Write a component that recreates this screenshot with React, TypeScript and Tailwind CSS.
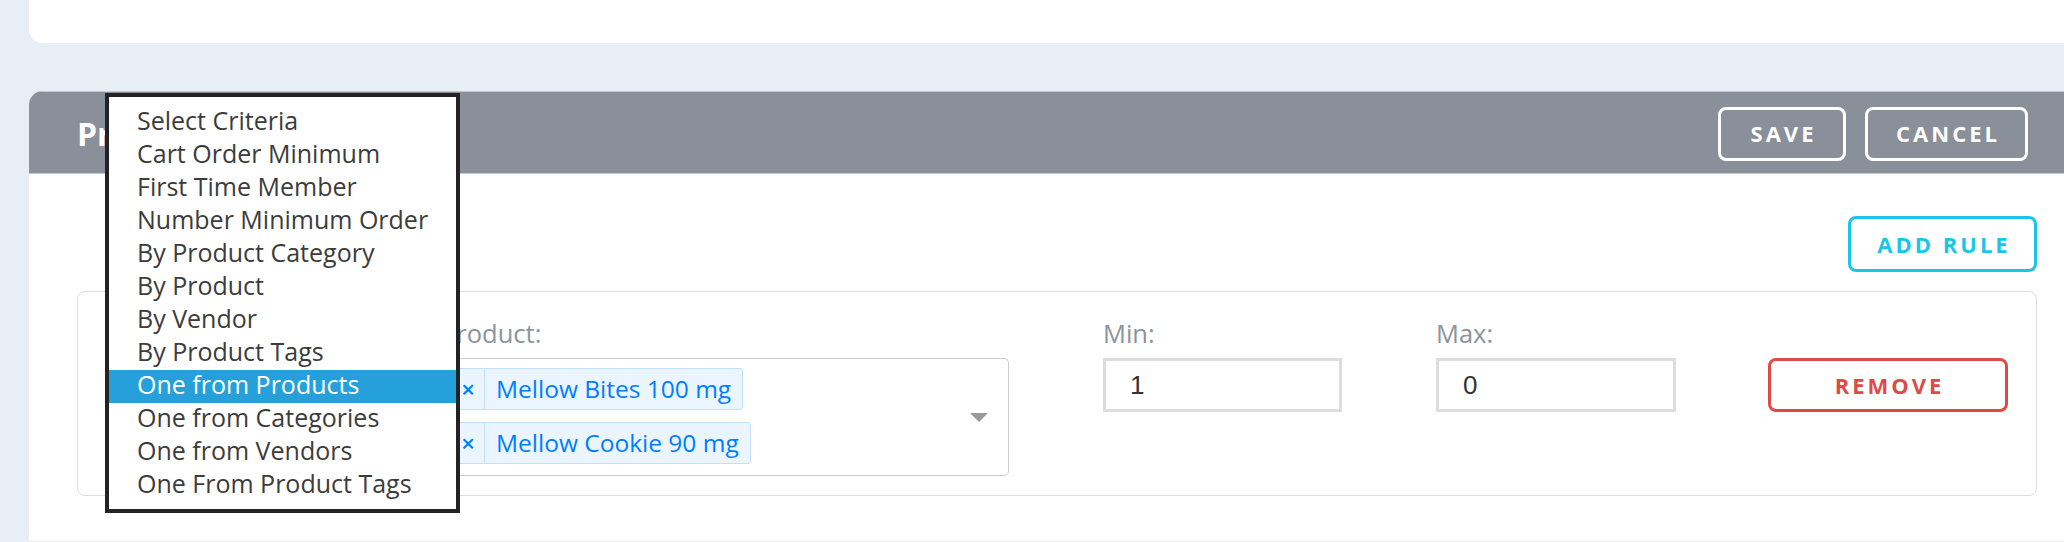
import React from "react";

const criteria = [
  "Select Criteria",
  "Cart Order Minimum",
  "First Time Member",
  "Number Minimum Order",
  "By Product Category",
  "By Product",
  "By Vendor",
  "By Product Tags",
  "One from Products",
  "One from Categories",
  "One from Vendors",
  "One From Product Tags",
];

const products = ["Mellow Bites 100 mg", "Mellow Cookie 90 mg"];

function Label({ children }: { children?: React.ReactNode }) {
  return (
    <div className="mb-[7px] h-[36px] text-[25.5px] leading-[36px] text-[#8b949c]">
      {children}
    </div>
  );
}

function NumberBox({ value, width }: { value: string; width: string }) {
  return (
    <input
      readOnly
      value={value}
      className={`h-[54px] ${width} border-[3px] border-[#dddddd] bg-white pl-[24px] font-['Liberation_Sans',sans-serif] text-[26px] text-[#333333] outline-none`}
    />
  );
}

export default function App() {
  return (
    <div className="relative min-h-[542px] overflow-hidden bg-[#e8eef5] pl-[29px] font-['Open_Sans',sans-serif]">
      {/* top card */}
      <div className="h-[43px] rounded-bl-[14px] bg-white" />

      {/* panel */}
      <div className="mt-[48px] overflow-hidden rounded-tl-[14px] bg-white">
        <div className="flex h-[83px] items-center justify-between border-y border-[#c4c9cf] bg-[#8a9099] pl-[48px] pr-[36px] pt-[2px]">
          <h2 className="text-[32px] font-bold text-white">Promotion Rules</h2>
          <div className="flex gap-[19px]">
            <button className="h-[54px] w-[128px] rounded-[8px] border-[3px] border-white pl-[3px] text-[22px] font-bold tracking-[3px] text-white">
              SAVE
            </button>
            <button className="h-[54px] w-[163px] rounded-[8px] border-[3px] border-white pl-[3px] text-[22px] font-bold tracking-[3px] text-white">
              CANCEL
            </button>
          </div>
        </div>

        <div className="pb-[45px] pl-[48px] pr-[27px] pt-[42px]">
          <div className="flex justify-end">
            <button className="h-[56px] w-[189px] rounded-[8px] border-[3px] border-[#1bc5ea] pl-[3px] text-[22px] font-bold tracking-[3px] text-[#1bc5ea]">
              ADD RULE
            </button>
          </div>

          {/* rule */}
          <div className="mt-[19px] rounded-[8px] border border-[#dddddd] pb-[19px] pl-[29px] pt-[23px]">
            <div className="flex items-start gap-[94px]">
              {/* criteria column, covered by the open list */}
              <div className="w-[240px]">
                <Label />
                <div className="h-[54px] rounded-[5px] border border-[#cccccc]" />
              </div>

              <div className="w-[568px]">
                <Label>Product:</Label>
                <div className="flex h-[118px] items-center rounded-[5px] border border-[#cccccc]">
                  <div className="flex flex-1 flex-col items-start gap-[12px] self-start pl-[9px] pt-[9px]">
                    {products.map((p) => (
                      <div
                        key={p}
                        className="flex h-[42px] rounded-[3px] border border-[#c2e0ff] bg-[#ebf5ff] text-[#007eff]"
                      >
                        <span className="flex w-[33px] items-center justify-center border-r border-[#c2e0ff] text-[24px] font-semibold leading-none">
                          ×
                        </span>
                        <span className="flex items-center px-[11px] text-[24.5px] leading-none">
                          {p}
                        </span>
                      </div>
                    ))}
                  </div>
                  <span className="mr-[20px] h-0 w-0 border-x-[9px] border-t-[9px] border-x-transparent border-t-[#999999]" />
                </div>
              </div>

              <div className="w-[239px]">
                <Label>Min:</Label>
                <NumberBox value="1" width="w-[239px]" />
              </div>

              <div className="w-[240px]">
                <Label>Max:</Label>
                <NumberBox value="0" width="w-[240px]" />
              </div>

              <div className="ml-[-2px] w-[240px]">
                <Label />
                <button className="h-[54px] w-[240px] rounded-[8px] border-[3px] border-[#dc4b47] pl-[3px] text-[22px] font-bold tracking-[3px] text-[#dc4b47]">
                  REMOVE
                </button>
              </div>
            </div>
          </div>
        </div>
      </div>

      {/* open criteria list */}
      <ul className="absolute left-[105px] top-[93px] w-[355px] border-[4px] border-[#232323] bg-white pb-[7px] pt-[9px]">
        {criteria.map((c) => (
          <li
            key={c}
            className={`h-[33px] pl-[28px] text-[25px] leading-[29px] ${
              c === "One from Products"
                ? "bg-[#26a0da] text-white"
                : "text-[#3c3c3c]"
            }`}
          >
            {c}
          </li>
        ))}
      </ul>
    </div>
  );
}
